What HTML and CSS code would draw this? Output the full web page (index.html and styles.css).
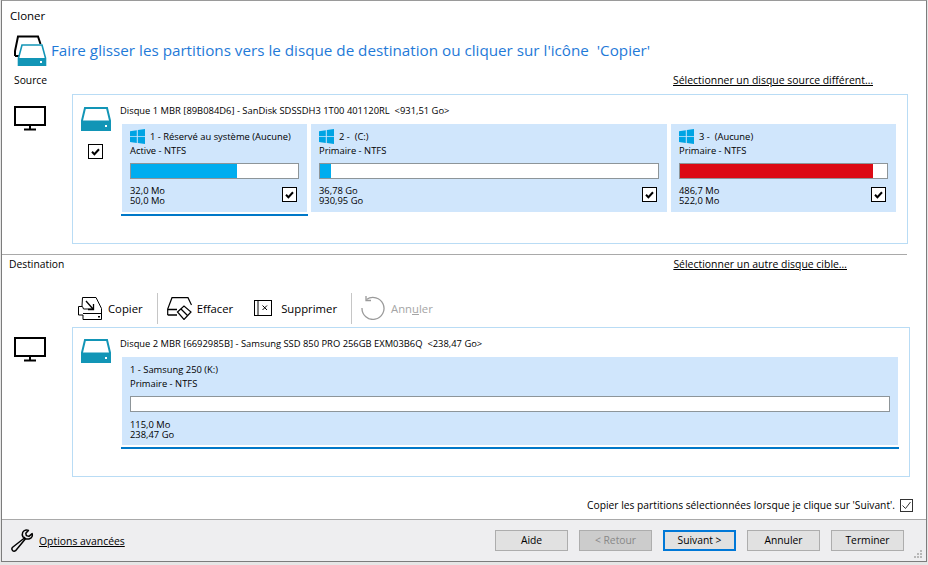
FILE: index.html
```html
<!DOCTYPE html>
<html lang="fr">
<head>
<meta charset="utf-8">
<title>Cloner</title>
<link rel="stylesheet" href="styles.css">
</head>
<body>
<svg class="defs" width="0" height="0" aria-hidden="true">
  <defs>
    <symbol id="disk" viewBox="0 0 30 24">
      <path d="M4 1h22l3 12.500V23H1V13.500z" fill="#fff" stroke="#1295b6" stroke-width="2"/>
      <path d="M1 13.500h28V24H1z" fill="#1295b6"/>
      <rect x="24" y="18" width="2" height="2" fill="#fff"/>
    </symbol>
    <symbol id="monitor" viewBox="0 0 33 25">
      <rect x="1" y="1" width="30" height="18" fill="#fff" stroke="#000" stroke-width="2"/>
      <path d="M16 20v3" stroke="#000" stroke-width="2"/>
      <path d="M10 23.500h12" stroke="#000" stroke-width="2"/>
    </symbol>
    <symbol id="win" viewBox="0 0 15 15">
      <path d="M0 2.200l6.800-1v6H0zM7.800 1.100L15 0v7.200H7.800zM0 8.100h6.800v6L0 13.100zM7.800 8.100H15V15l-7.200-1z" fill="#00a4e4"/>
    </symbol>
    <symbol id="tick" viewBox="0 0 15 15">
      <rect x="0.500" y="0.500" width="14" height="14" fill="#fff" stroke="#000"/>
      <path d="M4 7.800l2.400 2.400L11 5.300" fill="none" stroke="#000" stroke-width="2"/>
    </symbol>
  </defs>
</svg>

<div class="window">
  <main class="main">
    <div class="title">Cloner</div>
    <div class="heading">
      <svg class="head-icon" width="33" height="31" viewBox="0 0 33 31" aria-hidden="true">
        <path d="M1 21v-5L4 1.500h20L26.500 9" fill="none" stroke="#000" stroke-width="2"/>
        <path d="M1 21h5" stroke="#000" stroke-width="2"/>
        <path d="M8 10h20l3.500 13v7.500h-27V23z" fill="#fff" stroke="#1295b6" stroke-width="1.600"/>
        <path d="M4 23h28v8H4z" fill="#1295b6"/>
        <rect x="26" y="26" width="2" height="2" fill="#fff"/>
      </svg>
      <h1>Faire glisser les partitions vers le disque de destination ou cliquer sur l'icône&nbsp; 'Copier'</h1>
    </div>

    <section class="source">
      <div class="sec-head">
        <span>Source</span>
        <a href="#">Sélectionner un disque source différent…</a>
      </div>
      <div class="sec-body">
        <svg class="monitor"><use href="#monitor"/></svg>
        <div class="panel panel-source">
          <div class="disk-col">
            <svg class="disk"><use href="#disk"/></svg>
            <svg class="tick disk-tick"><use href="#tick"/></svg>
          </div>
          <div class="disk-main">
            <div class="disk-name">Disque 1 MBR [89B084D6] - SanDisk SDSSDH3 1T00 401120RL&nbsp; &lt;931,51 Go&gt;</div>
            <div class="parts">
              <div class="part part1 selected">
                <div class="part-line"><svg class="win"><use href="#win"/></svg>1 - Réservé au système (Aucune)</div>
                <div class="part-type">Active - NTFS</div>
                <div class="bar"><div class="fill" style="width:63.500%"></div></div>
                <div class="part-foot">
                  <div class="sizes">32,0 Mo<br>50,0 Mo</div>
                  <svg class="tick"><use href="#tick"/></svg>
                </div>
              </div>
              <div class="part part2">
                <div class="part-line"><svg class="win"><use href="#win"/></svg>2 -&nbsp; (C:)</div>
                <div class="part-type">Primaire - NTFS</div>
                <div class="bar"><div class="fill" style="width:3.400%"></div></div>
                <div class="part-foot">
                  <div class="sizes">36,78 Go<br>930,95 Go</div>
                  <svg class="tick"><use href="#tick"/></svg>
                </div>
              </div>
              <div class="part part3">
                <div class="part-line"><svg class="win"><use href="#win"/></svg>3 -&nbsp; (Aucune)</div>
                <div class="part-type">Primaire - NTFS</div>
                <div class="bar"><div class="fill red" style="width:93%"></div></div>
                <div class="part-foot">
                  <div class="sizes">486,7 Mo<br>522,0 Mo</div>
                  <svg class="tick"><use href="#tick"/></svg>
                </div>
              </div>
            </div>
          </div>
        </div>
      </div>
    </section>

    <section class="dest">
      <div class="sec-head dest-head">
        <span>Destination</span>
        <a href="#">Sélectionner un autre disque cible…</a>
      </div>
      <div class="toolbar">
        <div class="tool tool-copy">
          <svg width="24" height="23" viewBox="0 0 24 23" aria-hidden="true">
            <path d="M4 9l.5-8.500H18L23.500 11.500v11H5V18" fill="none" stroke="#000"/>
            <path d="M.5 9.500h4l1 2.500h10v-1.500M.5 9.500v8.500H5" fill="none" stroke="#000"/>
            <path d="M5 16.500h18.500" fill="none" stroke="#000"/>
            <path d="M8 4l7 8M15.500 7v5.500H10" fill="none" stroke="#000" stroke-width="1.300"/>
            <rect x="20" y="19" width="2" height="1.500"/>
          </svg>
          <span>Copier</span>
        </div>
        <div class="tool-sep"></div>
        <div class="tool tool-erase">
          <svg width="25" height="23" viewBox="0 0 25 23" aria-hidden="true">
            <path d="M.7 18v-6L5 .7h16L24.500 8" fill="none" stroke="#000" stroke-width="1.200"/>
            <path d="M.7 12.500H10M.7 18H10" fill="none" stroke="#000" stroke-width="1.400"/>
            <path d="M10.500 15L17 9l7 6-7 7.500z" fill="#fff" stroke="#000" stroke-width="1.200"/>
            <path d="M14 12l6.500 6.500" stroke="#000" stroke-width="1.200"/>
          </svg>
          <span>Effacer</span>
        </div>
        <div class="tool tool-del">
          <svg width="18" height="16" viewBox="0 0 18 16" aria-hidden="true">
            <rect x="0.500" y="0.500" width="17" height="15" fill="#fff" stroke="#000"/>
            <path d="M4 1v14" stroke="#000"/>
            <path d="M8.500 5.500l4.500 4.500M13 5.500L8.500 10" stroke="#000"/>
          </svg>
          <span>Supprimer</span>
        </div>
        <div class="tool-sep sep2"></div>
        <div class="tool tool-undo">
          <svg width="24" height="24" viewBox="0 0 24 24" aria-hidden="true">
            <path d="M5.500 3.500A11 11 0 1 1 1 12" fill="none" stroke="#9a9a9a" stroke-width="1.300"/>
            <path d="M5 0v4.500h5" fill="none" stroke="#9a9a9a" stroke-width="1.300"/>
          </svg>
          <span>Ann<u>u</u>ler</span>
        </div>
      </div>
      <div class="sec-body">
        <svg class="monitor"><use href="#monitor"/></svg>
        <div class="panel panel-dest">
          <div class="disk-col">
            <svg class="disk"><use href="#disk"/></svg>
          </div>
          <div class="disk-main">
            <div class="disk-name">Disque 2 MBR [6692985B] - Samsung SSD 850 PRO 256GB EXM03B6Q&nbsp; &lt;238,47 Go&gt;</div>
            <div class="parts">
              <div class="part part-wide selected">
                <div class="part-line">1 - Samsung 250 (K:)</div>
                <div class="part-type">Primaire - NTFS</div>
                <div class="bar"></div>
                <div class="part-foot">
                  <div class="sizes">115,0 Mo<br>238,47 Go</div>
                </div>
              </div>
            </div>
          </div>
        </div>
      </div>
    </section>

    <div class="copy-opt">
      <span>Copier les partitions sélectionnées lorsque je clique sur 'Suivant'.</span>
      <svg class="opt-box" width="13" height="13" viewBox="0 0 13 13" aria-hidden="true">
        <rect x="0.500" y="0.500" width="12" height="12" fill="#fff" stroke="#333"/>
        <path d="M2.500 6.500l3 3 5-6.500" fill="none" stroke="#333"/>
      </svg>
    </div>
  </main>

  <footer class="footer">
    <div class="options">
      <svg width="24" height="24" viewBox="0 0 26 26" aria-hidden="true">
        <path d="M16 9.500L2.500 20a2.500 2.500 0 0 0 3.500 3.500L16.800 10.500c3 1 6.500 0 7.200-2.500.3-1 .3-2 0-3l-3.500 3-2.800-.8-.6-2.700L20 1.500c-2-.8-5-.3-6.200 2-.7 1.500-.5 3.500.2 5z" fill="none" stroke="#000" stroke-width="1.600" stroke-linejoin="round"/>
      </svg>
      <a href="#">Options avancées</a>
    </div>
    <div class="buttons">
      <button type="button">Aide</button>
      <button type="button" class="disabled">&lt; Retour</button>
      <button type="button" class="primary">Suivant &gt;</button>
      <button type="button">Annuler</button>
      <button type="button">Terminer</button>
    </div>
    <svg class="grip" width="10" height="10" viewBox="0 0 10 10" aria-hidden="true">
      <path d="M7 1h2v2H7zM4 4h2v2H4zM7 4h2v2H7zM1 7h2v2H1zM4 7h2v2H4zM7 7h2v2H7z" fill="#b8b8b8"/>
    </svg>
  </footer>
</div>
</body>
</html>
```
FILE: styles.css
```css
* { box-sizing: border-box; }
html, body { margin: 0; padding: 0; }
body {
  width: 928px;
  height: 565px;
  background: #e6e6e6;
  font-family: "Open Sans", "Noto Sans", sans-serif;
  font-size: 11px;
  color: #000;
  overflow: hidden;
}
.defs { display: block; position: absolute; }
.window {
  width: 926px;
  height: 562px;
  margin-left: 1px;
  border: 1px solid #7c7c7c;
  border-top-color: #9a9a9a;
  background: #fff;
  display: flex;
  flex-direction: column;
  position: relative;
}
.main { flex: 1; padding-left: 8px; display: flex; flex-direction: column; }
.title { font-size: 11.500px; line-height: 16px; margin-top: 7px; }
.heading { display: flex; align-items: flex-start; height: 34px; margin-top: 11px; margin-left: 4px; }
.head-icon { flex: none; }
.heading h1 {
  font-size: 15.220px;
  font-weight: 400;
  color: #1f7ad8;
  margin: 5px 0 0 4px;
  line-height: 20px;
  white-space: nowrap;
}
.sec-head { display: flex; justify-content: space-between; font-size: 10.300px; line-height: 14px; padding-left: 4px; padding-right: 53px; }
.source .sec-head { margin-top: 4px; }
.sec-head a { color: #000; text-decoration: underline; font-size: 10.450px; }
.sec-body { display: flex; align-items: flex-start; }
.source .sec-body { margin-top: 7px; }
.dest .sec-body { margin-top: 1px; }
.monitor { width: 33px; height: 25px; margin-left: 4px; flex: none; }
.source .monitor { margin-top: 12px; }
.panel {
  display: flex;
  border: 1px solid #b9dcf5;
  margin-left: 25px;
  padding-left: 8px;
}
.panel-source { width: 836px; height: 150px; }
.panel-dest { width: 838px; height: 150px; }
.disk-col { width: 39px; flex: none; padding-top: 12px; }
.panel-dest .disk-col { padding-top: 11px; }
.disk { display: block; width: 30px; height: 24px; }
.tick { display: block; width: 15px; height: 15px; flex: none; margin-top: 1px; }
.disk-tick { margin-left: 7px; margin-top: 13px; }
.disk-main { flex: 1; min-width: 0; }
.disk-name { font-size: 9.400px; line-height: 13px; margin-top: 9px; white-space: nowrap; }
.parts { display: flex; gap: 4px; margin-top: 7px; margin-left: 2px; }
.part { background: #d0e6fc; height: 88px; padding: 5px 8px 0; position: relative; flex: none; }
.part1 { width: 185px; }
.part2 { width: 356px; }
.part3 { width: 225px; }
.part-wide { width: 776px; }
.part.selected::after {
  content: "";
  position: absolute;
  left: -1px;
  right: -1px;
  bottom: -4px;
  height: 2px;
  background: #0078c8;
}
.part-line { display: flex; align-items: center; font-size: 9.400px; line-height: 15px; white-space: pre; }
.win { width: 15px; height: 15px; margin-right: 5px; flex: none; }
.part-type { font-size: 9.400px; line-height: 13px; }
.bar { height: 16px; margin-top: 6px; border: 1px solid #8d9599; background: #fff; }
.fill { height: 100%; background: #00adef; }
.fill.red { background: #dc0a14; }
.part-foot { display: flex; justify-content: space-between; align-items: flex-start; margin-top: 7px; padding-right: 2px; }
.part-wide .part-foot { margin-top: 8px; }
.sizes { font-size: 9.400px; line-height: 10px; }
.dest .sec-head {
  border-top: 1px solid #a9a9a9;
  margin-left: -8px;
  margin-top: 10px;
  padding: 2px 60px 0 7px;
  height: 19px;
  width: 905px;
}
.toolbar { display: flex; align-items: center; height: 36px; margin-left: 68px; margin-top: 17px; font-size: 11.300px; }
.tool { display: flex; align-items: center; }
.tool-copy span { margin-left: 6px; }
.tool-sep { width: 1px; height: 31px; background: #c6c6c6; margin-left: 14px; margin-right: 9px; }
.tool-erase span { margin-left: 5px; }
.tool-del { margin-left: 21px; }
.tool-del span { margin-left: 9px; }
.sep2 { margin-left: 14px; margin-right: 9px; }
.tool-undo { color: #a5a5a5; }
.tool-undo span { margin-left: 6px; }
.dest .monitor { margin-top: 10px; }
.copy-opt { display: flex; justify-content: flex-end; align-items: center; margin-top: 21px; padding-right: 13px; font-size: 10.250px; line-height: 14px; }
.opt-box { margin-left: 5px; flex: none; }
.footer {
  height: 42px;
  background: #eeeef0;
  border-top: 1px solid #a9a9a9;
  display: flex;
  align-items: center;
  justify-content: space-between;
  padding: 0 22px 0 8px;
  position: relative;
}
.options { display: flex; align-items: center; font-size: 10.400px; }
.options a { color: #000; text-decoration: underline; margin-left: 5px; }
.buttons { display: flex; gap: 11px; margin-top: -1px; }
button {
  width: 73px;
  height: 21px;
  background: #e1e1e1;
  border: 1px solid #adadad;
  font-family: inherit;
  font-size: 10.300px;
  padding: 0;
  color: #000;
  border-radius: 0;
}
button.disabled { background: #ccc; color: #888; }
button.primary { border: 2px solid #0078d7; }
.grip { position: absolute; right: 3px; bottom: 2px; }
```
